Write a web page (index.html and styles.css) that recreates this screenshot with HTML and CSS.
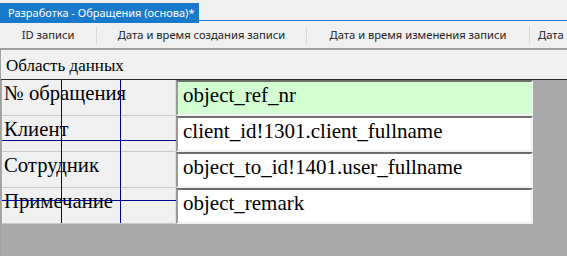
FILE: index.html
```html
<!DOCTYPE html>
<html lang="ru">
<head>
    <meta charset="UTF-8">
    <title>Разработка - Обращения (основа)*</title>
    <link rel="stylesheet" href="styles.css">
</head>
<body>
    <div class="tabbar">
        <div class="tab">Разработка - Обращения (основа)*</div>
    </div>

    <div class="columns">
        <div class="col col-id">ID записи</div>
        <div class="sep"></div>
        <div class="col col-created">Дата и время создания записи</div>
        <div class="sep"></div>
        <div class="col col-changed">Дата и время изменения записи</div>
        <div class="sep"></div>
        <div class="col col-rest">Дата</div>
    </div>

    <div class="area">
        <div class="area-title">Область данных</div>
        <div class="canvas">
            <div class="form">
                <div class="label">№ обращения</div>
                <div class="field field-key">object_ref_nr</div>

                <div class="label">Клиент</div>
                <div class="field">client_id!1301.client_fullname</div>

                <div class="label">Сотрудник</div>
                <div class="field">object_to_id!1401.user_fullname</div>

                <div class="label">Примечание</div>
                <div class="field">object_remark</div>

                <!-- направляющие разметки -->
                <div class="guide guide-v guide-v1"></div>
                <div class="guide guide-v guide-v2"></div>
                <div class="guide guide-h guide-h1"></div>
                <div class="guide guide-h guide-h2"></div>
            </div>
        </div>
    </div>
</body>
</html>
```

FILE: styles.css
```css
body {
    margin: 0;
    padding: 0;
    width: 567px;
    height: 256px;
    overflow: hidden;
    background-color: #f0f0f0;
    font-family: "Noto Sans", sans-serif;
}

.tabbar {
    height: 20px;
    border-bottom: 1px solid #1979ca;
    background-color: #f0f0f0;
}

.tab {
    display: inline-block;
    height: 20px;
    padding: 0 5px 0 8px;
    background-color: #1979ca;
    color: #fff;
    font-size: 11px;
    line-height: 20px;
    white-space: nowrap;
}

.columns {
    display: flex;
    align-items: center;
    height: 27px;
    border-bottom: 2px solid #a0a0a0;
    color: #1e1e1e;
    font-size: 11.2px;
    white-space: nowrap;
}

.col {
    text-align: center;
    overflow: hidden;
}

.col-id {
    width: 96px;
}

.col-created {
    width: 209px;
}

.col-changed {
    width: 222px;
}

.col-rest {
    flex: 1;
    text-align: left;
    padding-left: 8px;
}

.sep {
    width: 1px;
    height: 18px;
    background-color: #d8d8d8;
}

.area {
    border-left: 1px solid #a0a0a0;
}

.area-title {
    height: 29px;
    padding-left: 5px;
    font-family: "Liberation Serif", serif;
    font-size: 17px;
    line-height: 32px;
    color: #000;
}

.canvas {
    height: 176px;
    padding-left: 1px;
    border-top: 1px solid #2a2a2a;
    background-color: #aaa;
}

.form {
    position: relative;
    display: grid;
    grid-template-columns: 174px 357px;
    grid-auto-rows: 36px;
    width: 531px;
    color: #000;
}

.label {
    padding: 2px 0 0 2px;
    background-color: #f0f0f0;
    border-bottom: 1px solid #c8c8c8;
    border-right: 1px solid #dcdcdc;
    font-family: "Liberation Serif", serif;
    font-size: 20.7px;
    white-space: nowrap;
}

.field {
    padding: 1px 0 0 5px;
    border-top: 2px solid #6e6e6e;
    border-left: 2px solid #999;
    border-right: 2px solid #f0f0f0;
    border-bottom: 2px solid #f0f0f0;
    background-color: #fff;
    font-family: "Liberation Serif", serif;
    font-size: 21px;
    white-space: nowrap;
    overflow: hidden;
}

.field-key {
    background-color: #d2fed2;
}

.guide {
    position: absolute;
    background-color: #00008b;
}

.guide-v {
    top: 0;
    width: 1px;
    height: 143px;
}

.guide-v1 {
    left: 59px;
}

.guide-v2 {
    left: 118px;
}

.guide-h {
    left: 0;
    width: 174px;
    height: 1px;
}

.guide-h1 {
    top: 60px;
}

.guide-h2 {
    top: 120px;
}
```
